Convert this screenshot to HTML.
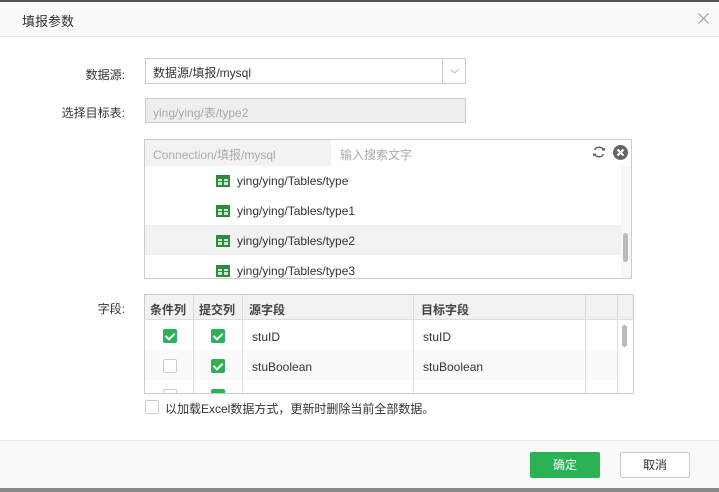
<!DOCTYPE html>
<html><head><meta charset="utf-8"><style>
*{box-sizing:border-box;margin:0;padding:0}
body{width:719px;height:492px;position:relative;overflow:hidden;background:#fff;font-family:"Liberation Sans","Noto Sans CJK SC",sans-serif;font-size:12px;color:#333}
.a{position:absolute}
.lbl{position:absolute;text-align:right;width:125px;left:0;font-size:12px;color:#333}
.ic{position:absolute;left:216px;width:14px;height:12px;background:#2e8b3e;border:1px solid #2e8b3e}
.ic:before{content:"";position:absolute;left:1px;top:3px;width:10px;height:6px;background:repeating-linear-gradient(90deg,#cfe8d3 0 4px,#2e8b3e 4px 6px)}
.ic:after{content:"";position:absolute;left:1px;top:5px;width:10px;height:1px;background:#2e8b3e}
.row{position:absolute;left:237px;font-size:12px;color:#333}
.cb{position:absolute;width:14px;height:14px;border-radius:2px}
.on{background:#2bb255}
.on:after{content:"";position:absolute;left:4px;top:2px;width:4px;height:7px;border:solid #fff;border-width:0 2px 2px 0;transform:rotate(45deg)}
.off{border:1px solid #ccc;background:#fff}
</style></head><body>
<div class="a" style="left:0;top:0;width:719px;height:2px;background:#555"></div>
<div class="a" style="left:0;top:2px;width:719px;height:35px;background:#f9f9f9;border-bottom:1px solid #e8e8e8"></div>
<div class="a" style="left:22px;top:11px;font-size:13px;color:#333">填报参数</div>
<svg class="a" style="left:698px;top:13px" width="11" height="11" viewBox="0 0 11 11"><path d="M0.5 0.5L10.5 10.5M10.5 0.5L0.5 10.5" stroke="#999" stroke-width="1" fill="none"/></svg>

<div class="lbl" style="top:66px">数据源:</div>
<div class="a" style="left:145px;top:58px;width:321px;height:26px;border:1px solid #ccc;background:#fff"></div>
<div class="a" style="left:442px;top:58px;width:1px;height:26px;background:#ccc"></div>
<svg class="a" style="left:450px;top:69px" width="9" height="5" viewBox="0 0 9 5"><path d="M0.5 0.5L4.5 4L8.5 0.5" stroke="#bbb" fill="none"/></svg>
<div class="a" style="left:153px;top:64px;color:#333">数据源/填报/mysql</div>

<div class="lbl" style="top:104px">选择目标表:</div>
<div class="a" style="left:145px;top:98px;width:321px;height:25px;border:1px solid #ccc;background:#eee"></div>
<div class="a" style="left:153px;top:104px;color:#aaa">ying/ying/表/type2</div>

<div class="a" style="left:144px;top:139px;width:488px;height:140px;border:1px solid #ccc"></div>
<div class="a" style="left:145px;top:140px;width:186px;height:26px;background:#f2f2f2"></div>
<div class="a" style="left:153px;top:146px;color:#aaa">Connection/填报/mysql</div>
<div class="a" style="left:340px;top:146px;color:#aaa">输入搜索文字</div>
<svg class="a" style="left:592px;top:145px" width="14" height="14" viewBox="0 0 14 14"><path d="M2.5 5A5 5 0 0 1 11.5 5M11.5 9A5 5 0 0 1 2.5 9" stroke="#555" stroke-width="1.3" fill="none"/><path d="M10 4.5L12 5L12.5 3" stroke="#555" stroke-width="1.2" fill="none"/><path d="M4 9.5L2 9L1.5 11" stroke="#555" stroke-width="1.2" fill="none"/></svg>
<div class="a" style="left:613px;top:145px;width:15px;height:15px;border-radius:50%;background:#666"></div>
<svg class="a" style="left:613px;top:145px" width="15" height="15" viewBox="0 0 15 15"><path d="M4.5 4.5L10.5 10.5M10.5 4.5L4.5 10.5" stroke="#fff" stroke-width="2"/></svg>
<div class="a" style="left:145px;top:225px;width:476px;height:30px;background:#f2f2f2"></div>
<div class="a" style="left:621px;top:166px;width:10px;height:112px;background:#f7f7f7"></div>
<div class="a" style="left:623px;top:233px;width:5px;height:29px;background:#bbb;border-radius:3px"></div>
<div class="ic" style="top:175px"></div><div class="row" style="top:174px">ying/ying/Tables/type</div>
<div class="ic" style="top:205px"></div><div class="row" style="top:204px">ying/ying/Tables/type1</div>
<div class="ic" style="top:235px"></div><div class="row" style="top:234px">ying/ying/Tables/type2</div>
<div class="ic" style="top:265px"></div><div class="row" style="top:264px">ying/ying/Tables/type3</div>

<div class="lbl" style="top:300px">字段:</div>
<div class="a" style="left:144px;top:294px;width:490px;height:100px;border:1px solid #ccc;overflow:hidden">
 <div class="a" style="left:0;top:0;width:490px;height:25px;background:#f2f2f2;border-bottom:1px solid #ddd"></div>
 <div class="a" style="left:0;top:55px;width:472px;height:30px;background:#fafafa"></div>
 <div class="a" style="left:48px;top:0;width:1px;height:100px;background:#ddd"></div>
 <div class="a" style="left:97px;top:0;width:1px;height:100px;background:#ddd"></div>
 <div class="a" style="left:268px;top:0;width:1px;height:100px;background:#ddd"></div>
 <div class="a" style="left:440px;top:0;width:1px;height:100px;background:#ddd"></div>
 <div class="a" style="left:472px;top:0;width:1px;height:100px;background:#ddd"></div>
 <div class="a" style="left:5px;top:6px;font-weight:bold;color:#444">条件列</div>
 <div class="a" style="left:54px;top:6px;font-weight:bold;color:#444">提交列</div>
 <div class="a" style="left:104px;top:6px;font-weight:bold;color:#444">源字段</div>
 <div class="a" style="left:276px;top:6px;font-weight:bold;color:#444">目标字段</div>
 <div class="a" style="left:477px;top:30px;width:5px;height:22px;background:#bbb;border-radius:3px"></div>
 <div class="cb on" style="left:18px;top:34px"></div><div class="cb on" style="left:66px;top:34px"></div>
 <div class="a" style="left:107px;top:35px">stuID</div><div class="a" style="left:278px;top:35px">stuID</div>
 <div class="cb off" style="left:18px;top:64px"></div><div class="cb on" style="left:66px;top:64px"></div>
 <div class="a" style="left:107px;top:65px">stuBoolean</div><div class="a" style="left:278px;top:65px">stuBoolean</div>
 <div class="cb off" style="left:18px;top:94px"></div><div class="cb on" style="left:66px;top:94px"></div>
</div>
<div class="cb off" style="left:145px;top:400px"></div>
<div class="a" style="left:165px;top:400px;color:#333">以加载Excel数据方式，更新时删除当前全部数据。</div>

<div class="a" style="left:0;top:440px;width:719px;height:48px;background:#f9f9f9;border-top:1px solid #e8e8e8"></div>
<div class="a" style="left:530px;top:452px;width:70px;height:26px;background:#2bb255;border-radius:2px;color:#fff;text-align:center;line-height:26px">确定</div>
<div class="a" style="left:620px;top:452px;width:70px;height:26px;background:#fff;border:1px solid #ccc;border-radius:2px;color:#333;text-align:center;line-height:24px">取消</div>
<div class="a" style="left:0;top:488px;width:719px;height:4px;background:#888"></div>
</body></html>
